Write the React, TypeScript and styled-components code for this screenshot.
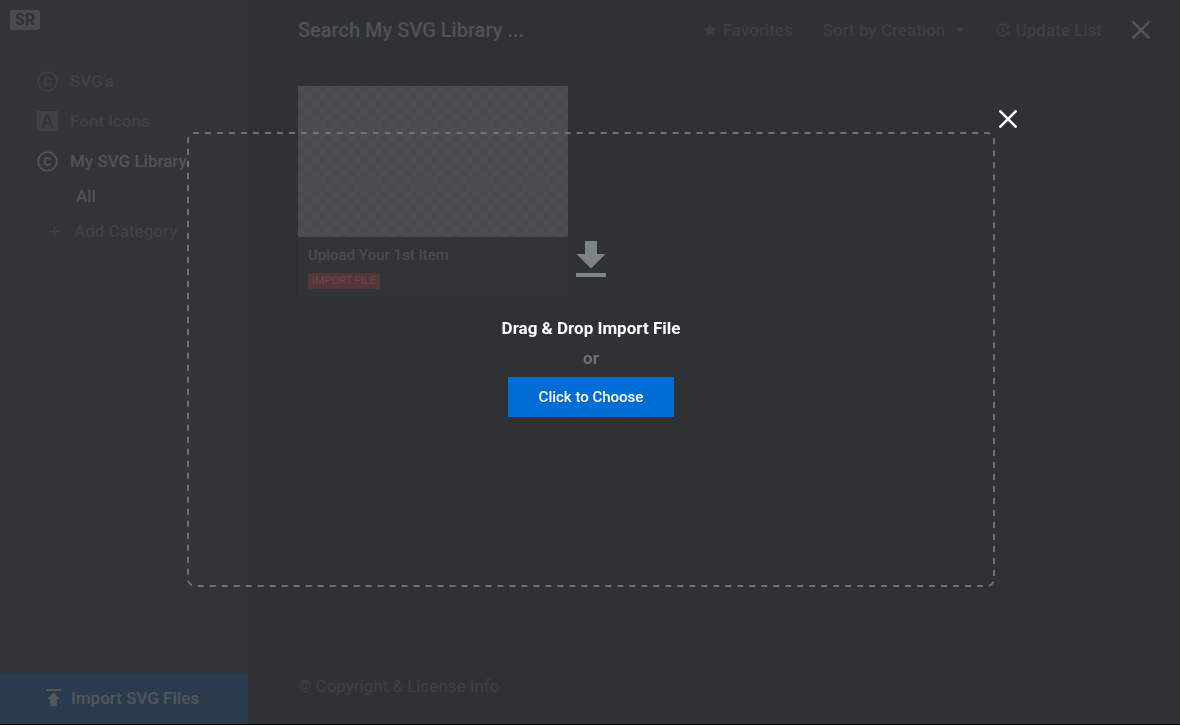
import React from "react";
import styled, { createGlobalStyle } from "styled-components";

const GlobalStyle = createGlobalStyle`
  * { box-sizing: border-box; }
  body { margin: 0; background: #303135; font-family: Roboto, "Liberation Sans", sans-serif; }
  button, input, select { font-family: inherit; }
  button { border: 0; padding: 0; background: none; cursor: pointer; }
  a { text-decoration: none; }
  svg { display: block; flex: none; }
`;

const Page = styled.div`
  display: flex;
  min-height: 100vh;
  background: #303135;
  border-bottom: 1px solid #000;
`;

const Sidebar = styled.aside`
  display: flex;
  flex-direction: column;
  flex: none;
  width: 248px;
  background: #333438;
`;

const Logo = styled.div`
  align-self: flex-start;
  margin: 10px 0 0 10px;
  width: 30px;
  border-radius: 3px;
  background: #4a4b4f;
  color: #303135;
  font-size: 16px;
  font-weight: 700;
  line-height: 20px;
  text-align: center;
`;

const Nav = styled.nav`
  display: flex;
  flex-direction: column;
  flex: 1;
  padding-top: 31px;
`;

const NavLink = styled.a<{ $active?: boolean }>`
  display: flex;
  align-items: center;
  gap: 12px;
  height: 40px;
  padding-left: 37px;
  color: ${(p) => (p.$active ? "#525357" : "#404145")};
  font-size: 17px;
  font-weight: 500;
`;

const SubLink = styled(NavLink)`
  height: 30px;
  padding-left: 76px;
`;

const AddButton = styled.button`
  display: flex;
  align-items: center;
  gap: 14px;
  height: 40px;
  padding-left: 49px;
  color: #404145;
  font-size: 17px;
  font-weight: 500;
`;

const ImportButton = styled.button`
  display: flex;
  align-items: center;
  gap: 10px;
  height: 51px;
  padding: 0 0 2px 46px;
  background: #2b3b4e;
  color: #53565b;
  font-size: 17px;
  font-weight: 500;
`;

const Main = styled.main`
  display: flex;
  flex-direction: column;
  flex: 1;
  min-width: 0;
  padding: 0 30px 0 50px;
`;

const Header = styled.header`
  display: flex;
  align-items: center;
  height: 60px;
`;

const Search = styled.input`
  flex: 1;
  min-width: 0;
  padding: 0;
  border: 0;
  outline: 0;
  background: none;
  color: #505155;
  font-size: 20px;
  font-weight: 500;
  &::placeholder { color: #505155; opacity: 1; }
`;

const Tools = styled.div`
  display: flex;
  align-items: center;
  gap: 30px;
  color: #3d3e42;
`;

const ToolButton = styled.button`
  display: flex;
  align-items: center;
  gap: 6px;
  color: inherit;
  font-size: 17px;
  font-weight: 500;
`;

const SortField = styled.label`
  display: flex;
  align-items: center;
  gap: 10px;
  padding-right: 2px;
`;

const SortSelect = styled.select`
  appearance: none;
  padding: 0;
  border: 0;
  background: none;
  color: inherit;
  font-size: 17px;
  font-weight: 500;
`;

const Card = styled.article`
  width: 270px;
  margin-top: 26px;
  background: #323337;
`;

const Preview = styled.div`
  height: 151px;
  background: repeating-conic-gradient(#4a4b4f 0 25%, #4d4e52 0 50%) 0 0 / 14px 14px;
`;

const CardBody = styled.div`
  display: flex;
  flex-direction: column;
  align-items: flex-start;
  gap: 8px;
  height: 60px;
  padding: 8px 10px 0;
`;

const CardTitle = styled.h2`
  margin: 0;
  color: #4a4b4f;
  font-size: 15px;
  font-weight: 500;
  line-height: 20px;
`;

const Tag = styled.span`
  padding: 0 4px;
  background: #53353a;
  color: #68494e;
  font-size: 11px;
  line-height: 16px;
`;

const Footer = styled.footer`
  margin-top: auto;
  padding-bottom: 28px;
  a { color: #3f4044; font-size: 17px; line-height: 20px; }
`;

const Overlay = styled.div`
  position: fixed;
  inset: 0;
  display: flex;
  padding: 132px 185px 138px 187px;
`;

const DropZone = styled.section`
  position: relative;
  display: flex;
  flex: 1;
  flex-direction: column;
  align-items: center;
  padding-top: 109px;
`;

const DashedOutline = styled.svg`
  position: absolute;
  inset: 1px;
  width: calc(100% - 2px);
  height: calc(100% - 2px);
  overflow: visible;
  pointer-events: none;
`;

const CloseDrop = styled.button`
  position: absolute;
  top: -22px;
  right: -22px;
`;

const DropTitle = styled.h1`
  margin: 40px 0 0;
  color: #fff;
  font-size: 17px;
  font-weight: 700;
  line-height: 22px;
`;

const Or = styled.span`
  margin: 8px 0;
  color: #707174;
  font-size: 17px;
  font-weight: 700;
  line-height: 22px;
`;

const ChooseButton = styled.button`
  width: 166px;
  height: 40px;
  background: #006dd5;
  color: #fff;
  font-size: 15px;
  font-weight: 500;
`;

const CopyrightIcon = () => (
  <svg width="21" height="21" viewBox="0 0 21 21" fill="none" stroke="currentColor" strokeWidth="1.9">
    <circle cx="10.5" cy="10.5" r="9.4" />
    <path d="M13.6 9.1C13.3 7.5 12.2 6.9 10.6 6.9C8.6 6.9 7.6 8.2 7.6 10.5S8.6 14.1 10.6 14.1C12.2 14.1 13.3 13.5 13.6 11.9" />
  </svg>
);

const FontIcon = () => (
  <svg width="21" height="20" viewBox="0 0 21 20" fill="currentColor" fillRule="evenodd">
    <path d="M1 0H20Q21 0 21 1V19Q21 20 20 20H1Q0 20 0 19V1Q0 0 1 0ZM9.3 3L4.5 17H6.7L7.9 13.3H13.1L14.3 17H16.5L11.7 3ZM10.5 5.6L12.5 11.4H8.5Z" />
  </svg>
);

const PlusIcon = () => (
  <svg width="11" height="11" viewBox="0 0 11 11" stroke="currentColor" strokeWidth="1.6">
    <path d="M5.5 0V11M0 5.5H11" />
  </svg>
);

const ImportIcon = () => (
  <svg width="15" height="17" viewBox="0 0 15 17" fill="currentColor">
    <path d="M0 0H15V2H0ZM7.5 3.2L14 10H10.8V17H4.2V10H1Z" />
  </svg>
);

const StarIcon = () => (
  <svg width="14" height="14" viewBox="0 0 14 14" fill="currentColor">
    <path d="M7 0L8.8 4.8L14 5.1L10 8.4L11.4 13.4L7 10.6L2.6 13.4L4 8.4L0 5.1L5.2 4.8Z" />
  </svg>
);

const CaretIcon = () => (
  <svg width="8" height="5" viewBox="0 0 8 5" fill="currentColor">
    <path d="M0 0H8L4 5Z" />
  </svg>
);

const UpdateIcon = () => (
  <svg width="14" height="14" viewBox="0 0 14 14" fill="none" stroke="currentColor" strokeWidth="1.6">
    <path d="M11.3 2.7A6 6 0 1 0 13 8M6.8 3.8V7.4L9.4 8.8" />
    <path d="M13.4 0.8V5.4H8.8Z" fill="currentColor" stroke="none" />
  </svg>
);

const CrossIcon = ({ color }: { color: string }) => (
  <svg width="18" height="18" viewBox="0 0 18 18" stroke={color} strokeWidth="2.5" strokeLinecap="round">
    <path d="M1.3 1.3L16.7 16.7M16.7 1.3L1.3 16.7" />
  </svg>
);

const DropIcon = () => (
  <svg width="30" height="36" viewBox="0 0 30 36" fill="#7c8487">
    <path d="M9 0H21V13H29.5L15 27.5L0.5 13H9ZM0 32H30V36H0Z" />
  </svg>
);

export default function App() {
  return (
    <>
      <GlobalStyle />
      <Page>
        <Sidebar>
          <Logo>SR</Logo>
          <Nav>
            <NavLink href="#svgs"><CopyrightIcon />SVG's</NavLink>
            <NavLink href="#fonts"><FontIcon />Font Icons</NavLink>
            <NavLink href="#library" $active><CopyrightIcon />My SVG Library</NavLink>
            <SubLink href="#all" $active>All</SubLink>
            <AddButton><PlusIcon />Add Category</AddButton>
          </Nav>
          <ImportButton><ImportIcon />Import SVG Files</ImportButton>
        </Sidebar>
        <Main>
          <Header>
            <Search type="text" aria-label="Search library" placeholder="Search My SVG Library ..." />
            <Tools>
              <ToolButton><StarIcon />Favorites</ToolButton>
              <SortField>
                <SortSelect aria-label="Sort order">
                  <option>Sort by Creation</option>
                </SortSelect>
                <CaretIcon />
              </SortField>
              <ToolButton><UpdateIcon />Update List</ToolButton>
              <ToolButton aria-label="Close library"><CrossIcon color="#55565a" /></ToolButton>
            </Tools>
          </Header>
          <Card>
            <Preview />
            <CardBody>
              <CardTitle>Upload Your 1st Item</CardTitle>
              <Tag>IMPORT FILE</Tag>
            </CardBody>
          </Card>
          <Footer><a href="#license">© Copyright &amp; License Info</a></Footer>
        </Main>
      </Page>
      <Overlay>
        <DropZone aria-label="Import">
          <DashedOutline aria-hidden="true">
            <rect width="100%" height="100%" rx="7" fill="none" stroke="#707174" strokeWidth="2" strokeDasharray="6 6" strokeDashoffset="2" pathLength="2508" />
          </DashedOutline>
          <CloseDrop aria-label="Close import"><CrossIcon color="#fff" /></CloseDrop>
          <DropIcon />
          <DropTitle>Drag &amp; Drop Import File</DropTitle>
          <Or>or</Or>
          <ChooseButton>Click to Choose</ChooseButton>
        </DropZone>
      </Overlay>
    </>
  );
}
